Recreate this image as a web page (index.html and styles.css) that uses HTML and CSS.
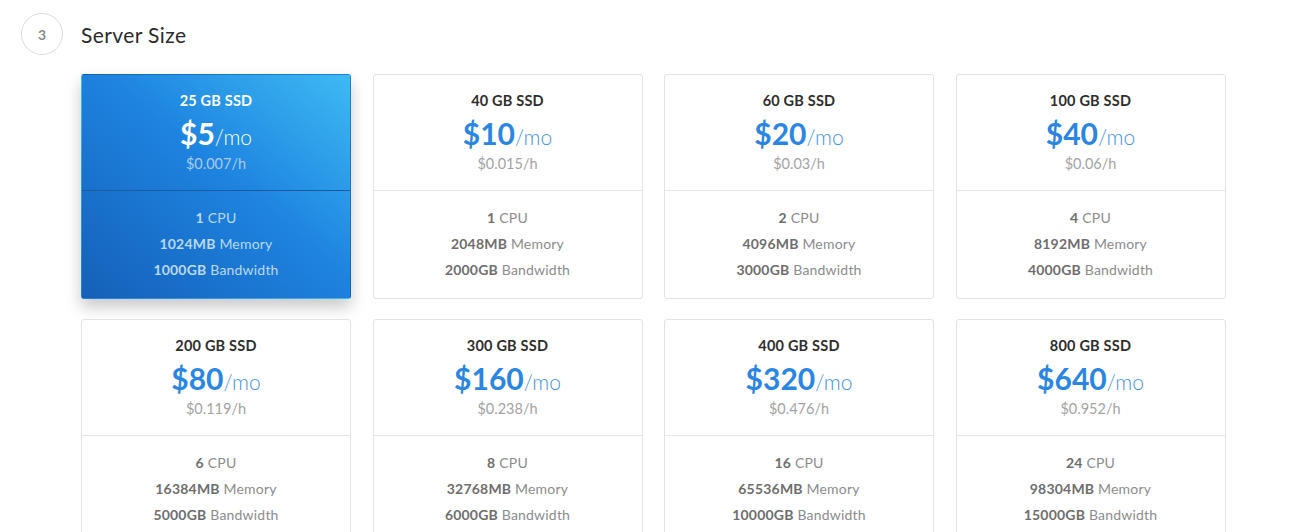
FILE: index.html
```html
<!DOCTYPE html>
<html lang="en">
  <head>
    <meta charset="utf-8">
    <meta name="viewport" content="width=device-width, initial-scale=1">
    <title>Server Size</title>
    <link rel="stylesheet" href="styles.css">
  </head>
  <body>
    <section class="step">
      <header class="step-header">
        <span class="step-number">3</span>
        <h2 class="step-title">Server Size</h2>
      </header>

      <div class="plans">
        <div class="plan selected">
          <div class="plan-head">
            <p class="plan-disk">25 GB SSD</p>
            <p class="plan-price">$5<span>/mo</span></p>
            <p class="plan-hourly">$0.007/h</p>
          </div>
          <ul class="plan-specs">
            <li><b>1</b> CPU</li>
            <li><b>1024MB</b> Memory</li>
            <li><b>1000GB</b> Bandwidth</li>
          </ul>
        </div>
        <div class="plan">
          <div class="plan-head">
            <p class="plan-disk">40 GB SSD</p>
            <p class="plan-price">$10<span>/mo</span></p>
            <p class="plan-hourly">$0.015/h</p>
          </div>
          <ul class="plan-specs">
            <li><b>1</b> CPU</li>
            <li><b>2048MB</b> Memory</li>
            <li><b>2000GB</b> Bandwidth</li>
          </ul>
        </div>
        <div class="plan">
          <div class="plan-head">
            <p class="plan-disk">60 GB SSD</p>
            <p class="plan-price">$20<span>/mo</span></p>
            <p class="plan-hourly">$0.03/h</p>
          </div>
          <ul class="plan-specs">
            <li><b>2</b> CPU</li>
            <li><b>4096MB</b> Memory</li>
            <li><b>3000GB</b> Bandwidth</li>
          </ul>
        </div>
        <div class="plan">
          <div class="plan-head">
            <p class="plan-disk">100 GB SSD</p>
            <p class="plan-price">$40<span>/mo</span></p>
            <p class="plan-hourly">$0.06/h</p>
          </div>
          <ul class="plan-specs">
            <li><b>4</b> CPU</li>
            <li><b>8192MB</b> Memory</li>
            <li><b>4000GB</b> Bandwidth</li>
          </ul>
        </div>
        <div class="plan">
          <div class="plan-head">
            <p class="plan-disk">200 GB SSD</p>
            <p class="plan-price">$80<span>/mo</span></p>
            <p class="plan-hourly">$0.119/h</p>
          </div>
          <ul class="plan-specs">
            <li><b>6</b> CPU</li>
            <li><b>16384MB</b> Memory</li>
            <li><b>5000GB</b> Bandwidth</li>
          </ul>
        </div>
        <div class="plan">
          <div class="plan-head">
            <p class="plan-disk">300 GB SSD</p>
            <p class="plan-price">$160<span>/mo</span></p>
            <p class="plan-hourly">$0.238/h</p>
          </div>
          <ul class="plan-specs">
            <li><b>8</b> CPU</li>
            <li><b>32768MB</b> Memory</li>
            <li><b>6000GB</b> Bandwidth</li>
          </ul>
        </div>
        <div class="plan">
          <div class="plan-head">
            <p class="plan-disk">400 GB SSD</p>
            <p class="plan-price">$320<span>/mo</span></p>
            <p class="plan-hourly">$0.476/h</p>
          </div>
          <ul class="plan-specs">
            <li><b>16</b> CPU</li>
            <li><b>65536MB</b> Memory</li>
            <li><b>10000GB</b> Bandwidth</li>
          </ul>
        </div>
        <div class="plan">
          <div class="plan-head">
            <p class="plan-disk">800 GB SSD</p>
            <p class="plan-price">$640<span>/mo</span></p>
            <p class="plan-hourly">$0.952/h</p>
          </div>
          <ul class="plan-specs">
            <li><b>24</b> CPU</li>
            <li><b>98304MB</b> Memory</li>
            <li><b>15000GB</b> Bandwidth</li>
          </ul>
        </div>
      </div>
    </section>
  </body>
</html>
```

FILE: styles.css
```css
body {
  margin: 0;
  background: #fff;
  font-family: Lato, "Open Sans", sans-serif;
  color: #333;
}

.step {
  padding: 13px 0 0 21px;
}

.step-header {
  display: flex;
  align-items: center;
  gap: 18px;
}

.step-number {
  display: flex;
  align-items: center;
  justify-content: center;
  width: 40px;
  height: 40px;
  border: 1px solid #dcdcdc;
  border-radius: 50%;
  font-size: 14px;
  font-weight: 700;
  color: #8a8a8a;
}

.step-title {
  margin: 0;
  font-size: 21px;
  font-weight: 400;
  letter-spacing: 0.4px;
  color: #2b2b2b;
}

.plans {
  display: grid;
  grid-template-columns: repeat(4, 270px);
  column-gap: 21.5px;
  row-gap: 20px;
  margin: 19px 0 0 60px;
}

.plan {
  border: 1px solid #e3e3e3;
  border-radius: 3px;
  background: #fff;
  text-align: center;
}

.plan p {
  margin: 0;
}

.plan-head {
  padding: 17px 0 17px;
  border-bottom: 1px solid #e6e6e6;
}

.plan-disk {
  font-size: 14.5px;
  font-weight: 700;
  letter-spacing: 0.2px;
  color: #2e2e2e;
  line-height: 18px;
}

.plan-price {
  margin-top: 6px !important;
  font-size: 30px;
  font-weight: 700;
  color: #2a86e2;
  line-height: 34px;
}

.plan-price span {
  font-size: 21px;
  font-weight: 300;
  color: #3f93e6;
}

.plan-hourly {
  margin-top: 1px !important;
  font-size: 14.5px;
  font-weight: 400;
  color: #a3a3a3;
  line-height: 18px;
}

.plan-specs {
  list-style: none;
  margin: 0;
  padding: 14px 0 15px;
  font-size: 14px;
  letter-spacing: 0.2px;
  line-height: 26px;
  color: #8c8c8c;
}

.plan-specs b {
  color: #6e6e6e;
}

.plan.selected {
  border-color: transparent;
  background: linear-gradient(to top right, #1560b8 0%, #1e84e0 55%, #3ebaf3 100%);
  box-shadow: 0 8px 16px rgba(0, 0, 0, 0.22);
}

.plan.selected .plan-head {
  border-bottom-color: #1a5aa0;
}

.plan.selected .plan-disk,
.plan.selected .plan-price,
.plan.selected .plan-price span {
  color: #fff;
}

.plan.selected .plan-hourly {
  color: #a8cbef;
}

.plan.selected .plan-specs,
.plan.selected .plan-specs b {
  color: #b9d8f5;
}
```
